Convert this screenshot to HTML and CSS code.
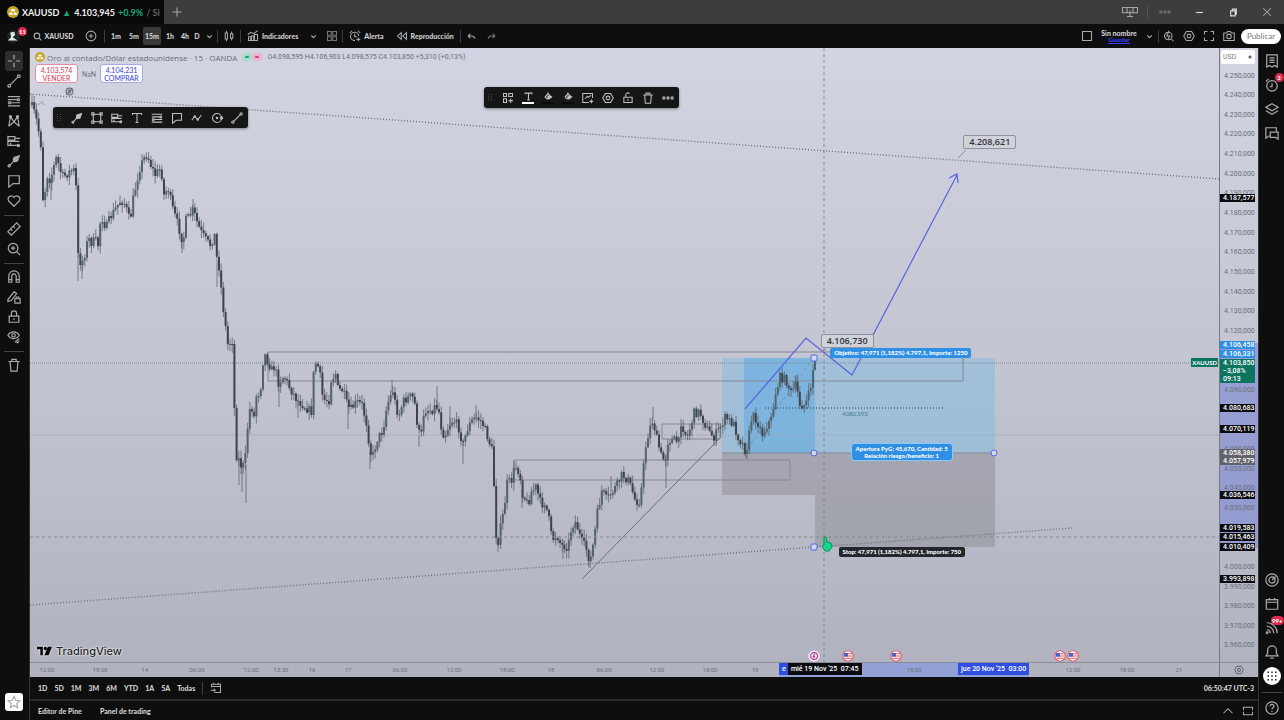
FILE: index.html
```html
<!DOCTYPE html>
<html lang="es">

<head>
    <meta charset="UTF-8">
    <meta name="viewport" content="width=device-width, initial-scale=1.0">
    <title>XAUUSD 4.103,945 +0.9%</title>
    <link rel="stylesheet" href="styles.css">
</head>

<body>

<!-- icon set -->
<svg class="sprite" aria-hidden="true">
    <symbol id="i-plus" viewBox="0 0 16 16"><path d="M8 2v12M2 8h12"/></symbol>
    <symbol id="i-search" viewBox="0 0 16 16"><circle cx="7" cy="7" r="5"/><path d="M11 11l4 4"/></symbol>
    <symbol id="i-add" viewBox="0 0 16 16"><circle cx="8" cy="8" r="6.5"/><path d="M8 5v6M5 8h6"/></symbol>
    <symbol id="i-down" viewBox="0 0 16 16"><path d="M4 6l4 4 4-4"/></symbol>
    <symbol id="i-up" viewBox="0 0 16 16"><path d="M2 11l6-6 6 6"/></symbol>
    <symbol id="i-candles" viewBox="0 0 16 16"><path d="M3 4h3v8H3zM4.500 1v3M4.500 12v3M10 5h3v6h-3zM11.500 2v3M11.500 11v3"/></symbol>
    <symbol id="i-indicators" viewBox="0 0 16 16"><path d="M1 6l4-3 4 2 5-4M2 14V9h3v5zM6 14V8h3v6zM10 14V6h4v8z"/></symbol>
    <symbol id="i-grid" viewBox="0 0 16 16"><path d="M2 2h5v5H2zM9 2h5v5H9zM2 9h5v5H2zM9 9h5v5H9z"/></symbol>
    <symbol id="i-alert" viewBox="0 0 16 16"><path d="M13 8a5.500 5.500 0 1 0-5 6M7.500 5v4h3M1 4l3-3M12 1l3 3M12.500 10v5M10 12.500h5"/></symbol>
    <symbol id="i-replay" viewBox="0 0 16 16"><path d="M7 3.500L2 8l5 4.500zM14 3.500L9 8l5 4.500z"/></symbol>
    <symbol id="i-undo" viewBox="0 0 16 16"><path d="M6 3L2 7l4 4M2 7h6q5 0 6 5"/></symbol>
    <symbol id="i-redo" viewBox="0 0 16 16"><path d="M10 3l4 4-4 4M14 7H8q-5 0-6 5"/></symbol>
    <symbol id="i-layout" viewBox="0 0 16 16"><path d="M2 2h12v12H2z"/></symbol>
    <symbol id="i-quick" viewBox="0 0 16 16"><circle cx="7" cy="8" r="5"/><path d="M11 12l3 3M8 1L5 8h4l-2 4"/></symbol>
    <symbol id="i-settings" viewBox="0 0 16 16"><path d="M4.500 2h7L15 8l-3.500 6h-7L1 8z"/><circle cx="8" cy="8" r="2.500"/></symbol>
    <symbol id="i-full" viewBox="0 0 16 16"><path d="M2 6V2h4M10 2h4v4M14 10v4h-4M6 14H2v-4"/></symbol>
    <symbol id="i-camera" viewBox="0 0 16 16"><path d="M1 4h4l1-2h4l1 2h4v10H1z"/><circle cx="8" cy="8.500" r="3"/></symbol>
    <symbol id="i-cross" viewBox="0 0 16 16"><path d="M8 1v5M8 10v5M1 8h5M10 8h5"/></symbol>
    <symbol id="i-line" viewBox="0 0 16 16"><path d="M3.500 12.500l9-9"/><circle cx="2.500" cy="13.500" r="1.500"/><circle cx="13.500" cy="2.500" r="1.500"/></symbol>
    <symbol id="i-fib" viewBox="0 0 16 16"><path d="M1 3h14M1 6.500h11M4 10h11M1 13.500h14"/><circle cx="13" cy="6.500" r="1.300"/><circle cx="3" cy="10" r="1.300"/></symbol>
    <symbol id="i-pattern" viewBox="0 0 16 16"><path d="M2 14L4 3l4 6 4-6 2 11M2 14l6-5 6 5"/><circle cx="4" cy="3" r="1.300"/><circle cx="12" cy="3" r="1.300"/></symbol>
    <symbol id="i-forecast" viewBox="0 0 16 16"><path d="M1 2v12M1 3h8v4H1M1 8.500h13M1 13h13M4 13v-3M9 5h6"/><circle cx="13" cy="13" r="1.300"/></symbol>
    <symbol id="i-brush" viewBox="0 0 16 16"><path d="M2.500 13.500l11-11"/><path d="M7 7l1-3 6-2-2 6-3 1z" fill="currentColor"/><circle cx="2.500" cy="13.500" r="1.300"/></symbol>
    <symbol id="i-callout" viewBox="0 0 16 16"><path d="M2 2h12v9H7l-5 4z"/></symbol>
    <symbol id="i-heart" viewBox="0 0 16 16"><path d="M8 14L2 8C-1 4 5 0 8 4c3-4 9 0 6 4z"/></symbol>
    <symbol id="i-ruler" viewBox="0 0 16 16"><path d="M1 11L11 1l4 4L5 15zM7 5l2 2M4 8l2 2"/></symbol>
    <symbol id="i-zoom" viewBox="0 0 16 16"><circle cx="7" cy="7" r="5.500"/><path d="M11 11l4 4M7 4.500v5M4.500 7h5"/></symbol>
    <symbol id="i-magnet" viewBox="0 0 16 16"><path d="M2 14V7a6 6 0 0 1 12 0v7h-3.500V7a2.500 2.500 0 0 0-5 0v7zM2 11h3.500M10.500 11H14"/></symbol>
    <symbol id="i-pencil" viewBox="0 0 16 16"><path d="M1 11l7-9 3 2-6 8-4 1zM9 10h6v5H9zM10.500 10V8h3v2"/></symbol>
    <symbol id="i-lock" viewBox="0 0 16 16"><path d="M2.500 7h11v7h-11zM5 7V4a3 3 0 0 1 6 0v3M8 9.500v2"/></symbol>
    <symbol id="i-unlock" viewBox="0 0 16 16"><path d="M2.500 7h11v7h-11zM5 7V4a3 3 0 0 1 5-2M8 9v3"/></symbol>
    <symbol id="i-eye" viewBox="0 0 16 16"><path d="M1 6c3-5 10-5 13 0-3 5-10 5-13 0z"/><circle cx="7.500" cy="6" r="2"/><path d="M9 14l5-4M11 15l3-2"/></symbol>
    <symbol id="i-study" viewBox="0 0 16 16"><circle cx="8" cy="8" r="6"/><circle cx="8" cy="8" r="2.500"/><path d="M3 13L13 3"/></symbol>
    <symbol id="i-trash" viewBox="0 0 16 16"><path d="M1.500 4h13M5.500 4V1.500h5V4M3.500 4l1 11h7l1-11"/></symbol>
    <symbol id="i-star" viewBox="0 0 16 16"><path d="M8 1.500l2 4.500 4.800.5-3.600 3.200 1 4.800L8 12l-4.200 2.500 1-4.800L1.200 6.500 6 6z"/></symbol>
    <symbol id="i-rect" viewBox="0 0 16 16"><path d="M3 3h10v10H3zM1 1h3v3H1zM12 1h3v3h-3zM1 12h3v3H1zM12 12h3v3h-3z"/></symbol>
    <symbol id="i-text" viewBox="0 0 16 16"><path d="M2 4V2h12v2M8 2v12M6 14h4"/></symbol>
    <symbol id="i-wave" viewBox="0 0 16 16"><path d="M1 11l4-5 4 4 5-6"/><circle cx="5" cy="6" r="1"/><circle cx="9" cy="10" r="1"/></symbol>
    <symbol id="i-circle" viewBox="0 0 16 16"><circle cx="8" cy="8" r="6"/><circle cx="8" cy="8" r="1"/><circle cx="14" cy="8" r="1.500"/></symbol>
    <symbol id="i-template" viewBox="0 0 16 16"><path d="M2 2h4v4H2zM9 2h5v4H9zM2 9h4v5H2zM8.500 11.500h6M11.500 8.500v6"/></symbol>
    <symbol id="i-fill" viewBox="0 0 16 16"><path d="M7 1v4M7 3l6 6-4 3H5L2 9z"/><path d="M7 7l6 2-4 3H7z" fill="currentColor"/></symbol>
    <symbol id="i-note" viewBox="0 0 16 16"><path d="M14 8V2H1v12h8M4 9l3-3 2 1 3-3M12.500 10v5M10 12.500h5"/></symbol>
    <symbol id="i-dots" viewBox="0 0 16 16"><circle cx="2.500" cy="8" r="1.500"/><circle cx="8" cy="8" r="1.500"/><circle cx="13.500" cy="8" r="1.500"/></symbol>
    <symbol id="i-watch" viewBox="0 0 16 16"><path d="M2 1h12v14l-3-2-3 2-3-2-3 2zM5 4.500h6M5 7h6M5 9.500h6"/></symbol>
    <symbol id="i-clock" viewBox="0 0 16 16"><circle cx="8" cy="9" r="6"/><path d="M8 6v4H5M1 4l3-3"/></symbol>
    <symbol id="i-layers" viewBox="0 0 16 16"><path d="M8 2l7 4-7 4-7-4zM1 10l7 4 7-4"/></symbol>
    <symbol id="i-chat" viewBox="0 0 16 16"><path d="M5 11l-4 3V2h12v4M6 7h9v8l-3-2H6z"/></symbol>
    <symbol id="i-target" viewBox="0 0 16 16"><circle cx="8" cy="8" r="7"/><circle cx="8" cy="8" r="3.500"/><path d="M8 8l4-4"/></symbol>
    <symbol id="i-calendar" viewBox="0 0 16 16"><path d="M1.500 3h13v11h-13zM1.500 6h13M5 1v3M11 1v3"/></symbol>
    <symbol id="i-feed" viewBox="0 0 16 16"><path d="M2 6a8 8 0 0 1 8 8M2 2a12 12 0 0 1 12 12M2 10a4 4 0 0 1 4 4"/><circle cx="2.500" cy="13.500" r="1"/></symbol>
    <symbol id="i-bell" viewBox="0 0 16 16"><path d="M1 12.500h14l-2-3V6a5 5 0 0 0-10 0v3.500zM6 15h4"/></symbol>
    <symbol id="i-apps" viewBox="0 0 16 16"><path d="M2 2h2v2H2zM7 2h2v2H7zM12 2h2v2h-2zM2 7h2v2H2zM7 7h2v2H7zM12 7h2v2h-2zM2 12h2v2H2zM7 12h2v2H7zM12 12h2v2h-2z" fill="currentColor" stroke="none"/></symbol>
    <symbol id="i-help" viewBox="0 0 16 16"><circle cx="8" cy="8" r="7"/><path d="M5.800 6c0-3 4.500-3 4.500 0 0 1.500-2.300 1.500-2.300 3.500M8 11v1.500"/></symbol>
    <symbol id="i-goto" viewBox="0 0 16 16"><path d="M6 14h8V3H2v4M2 6h12M5 1v3M11 1v3M1 11h6M5 9l2 2-2 2"/></symbol>
    <symbol id="i-screens" viewBox="0 0 24 16"><path d="M2 2h20v7H2zM8 2v7M16 2v7M12 6v8M8 14h8"/></symbol>
    <symbol id="i-min" viewBox="0 0 16 16"><path d="M2 8h12"/></symbol>
    <symbol id="i-restore" viewBox="0 0 16 16"><path d="M3 5h8v9H3zM6 5V2h7v9h-2"/></symbol>
    <symbol id="i-close" viewBox="0 0 16 16"><path d="M3 3l10 10M13 3L3 13"/></symbol>
    <symbol id="i-panel" viewBox="0 0 16 16"><path d="M2 7V3h12v4M2 9v4h12V9"/></symbol>
    <symbol id="i-gold" viewBox="0 0 16 16"><circle cx="8" cy="8" r="8" fill="#c9a227" stroke="none"/><path d="M5 7l1-3h4l1 3zM2.500 11.500l1-3h3.500l1 3zM8.500 11.500l1-3H12.500l1 3z" fill="#fff" stroke="none"/></symbol>
    <symbol id="i-flag" viewBox="0 0 16 16"><circle cx="8" cy="8" r="7" fill="#fff" stroke="#e0525c"/><path d="M8 5h5M8 8h6M3 11h10" stroke="#e0525c"/><path d="M3 4h5v5H2z" fill="#4562c9" stroke="none"/></symbol>
    <symbol id="i-bolt" viewBox="0 0 16 16"><circle cx="8" cy="8" r="6" fill="#fff" stroke="#f4e6f4" stroke-width="3"/><circle cx="8" cy="8" r="4.500" stroke="#a8329e" stroke-width="1.500"/><path d="M9 5L7 8.500h2L7.500 11" stroke="#a8329e"/></symbol>
</svg>

<header class="titlebar">
    <div class="tab">
        <svg class="icon gold"><use href="#i-gold"/></svg>
        <span>XAUUSD</span>
        <span class="up">▲</span>
        <span>4.103,945</span>
        <span class="up">+0.9%</span>
        <span class="fade">/ Si</span>
    </div>
    <button class="new-tab" aria-label="Nueva pestaña"><svg class="icon"><use href="#i-plus"/></svg></button>
    <div class="window-controls">
        <button aria-label="Pantallas"><svg class="icon wide"><use href="#i-screens"/></svg></button>
        <span class="sep"></span>
        <button aria-label="Menú"><svg class="icon dim"><use href="#i-dots"/></svg></button>
        <button aria-label="Minimizar"><svg class="icon small"><use href="#i-min"/></svg></button>
        <button aria-label="Restaurar"><svg class="icon small"><use href="#i-restore"/></svg></button>
        <button aria-label="Cerrar"><svg class="icon"><use href="#i-close"/></svg></button>
    </div>
</header>

<nav class="toolbar">
    <button class="avatar" aria-label="Perfil">
        <svg viewBox="0 0 16 16"><circle cx="8" cy="8" r="8" fill="#1d2526"/><path d="M4 3l5-1 1 4-3 3 6 4H1l4-4z" fill="#dfe5e5"/></svg>
        <span class="badge">11</span>
    </button>
    <button class="symbol"><svg class="icon small"><use href="#i-search"/></svg>XAUUSD</button>
    <button class="w26" aria-label="Comparar"><svg class="icon"><use href="#i-add"/></svg></button>
    <span class="sep"></span>
    <div class="intervals">
        <button>1m</button>
        <button>5m</button>
        <button class="active">15m</button>
        <button>1h</button>
        <button class="narrow">4h</button>
        <button class="narrow">D</button>
        <button class="narrow" aria-label="Intervalos"><svg class="icon small"><use href="#i-down"/></svg></button>
    </div>
    <span class="sep"></span>
    <button class="w22" aria-label="Velas"><svg class="icon"><use href="#i-candles"/></svg></button>
    <span class="sep"></span>
    <button class="labelled"><svg class="icon"><use href="#i-indicators"/></svg>Indicadores</button>
    <button class="w18" aria-label="Más indicadores"><svg class="icon small"><use href="#i-down"/></svg></button>
    <button class="w20" aria-label="Plantillas"><svg class="icon dim"><use href="#i-grid"/></svg></button>
    <span class="sep"></span>
    <button class="labelled"><svg class="icon"><use href="#i-alert"/></svg>Alerta</button>
    <button class="labelled"><svg class="icon"><use href="#i-replay"/></svg>Reproducción</button>
    <span class="sep"></span>
    <button class="w22" aria-label="Deshacer"><svg class="icon small"><use href="#i-undo"/></svg></button>
    <button class="w18" aria-label="Rehacer"><svg class="icon small dim"><use href="#i-redo"/></svg></button>

    <div class="toolbar-right">
        <button class="w22" aria-label="Diseño"><svg class="icon"><use href="#i-layout"/></svg></button>
        <button class="layout-name">Sin nombre<span>Guardar</span></button>
        <button class="w18" aria-label="Diseños"><svg class="icon small"><use href="#i-down"/></svg></button>
        <span class="sep"></span>
        <button class="w20" aria-label="Búsqueda rápida"><svg class="icon"><use href="#i-quick"/></svg></button>
        <button class="w20" aria-label="Configuración"><svg class="icon"><use href="#i-settings"/></svg></button>
        <button class="w20" aria-label="Pantalla completa"><svg class="icon"><use href="#i-full"/></svg></button>
        <button class="w20" aria-label="Captura"><svg class="icon"><use href="#i-camera"/></svg></button>
        <button class="publish">Publicar</button>
    </div>
</nav>

<div class="workspace">
    <aside class="rail left">
        <button class="active" aria-label="Cursor"><svg class="icon"><use href="#i-cross"/></svg></button>
        <button aria-label="Línea"><svg class="icon"><use href="#i-line"/></svg></button>
        <button aria-label="Fibonacci"><svg class="icon"><use href="#i-fib"/></svg></button>
        <button aria-label="Patrones"><svg class="icon"><use href="#i-pattern"/></svg></button>
        <button aria-label="Previsión"><svg class="icon"><use href="#i-forecast"/></svg></button>
        <button aria-label="Pinceles"><svg class="icon"><use href="#i-brush"/></svg></button>
        <button aria-label="Anotación"><svg class="icon"><use href="#i-callout"/></svg></button>
        <button aria-label="Iconos"><svg class="icon"><use href="#i-heart"/></svg></button>
        <hr>
        <button aria-label="Medir"><svg class="icon"><use href="#i-ruler"/></svg></button>
        <button aria-label="Acercar"><svg class="icon"><use href="#i-zoom"/></svg></button>
        <hr>
        <button aria-label="Imán"><svg class="icon"><use href="#i-magnet"/></svg></button>
        <button aria-label="Modo dibujo"><svg class="icon"><use href="#i-pencil"/></svg></button>
        <button aria-label="Bloquear"><svg class="icon"><use href="#i-lock"/></svg></button>
        <button aria-label="Ocultar"><svg class="icon"><use href="#i-eye"/></svg></button>
        <hr>
        <button aria-label="Eliminar"><svg class="icon"><use href="#i-trash"/></svg></button>
        <button class="favorites" aria-label="Favoritos"><svg class="icon"><use href="#i-star"/></svg></button>
    </aside>

    <main class="center">
        <section class="chart">
            <div class="plot">
                <svg class="drawing" viewBox="30 48 1189 614" preserveAspectRatio="none">
                    <g class="zones">
                        <path class="profit" d="M722 358h93v95h-93zM815 358h180v95H815z"/>
                        <path class="profit strong" d="M744 358h71v95h-71z"/>
                        <path class="loss" d="M722 453h93v42h-93zM815 453h180v94H815z"/>
                    </g>
                    <path class="grid-line" d="M30 435h1189"/>
                    <path class="price-line" d="M30 363h1189"/>
                    <path class="box" d="M268 352h695v29H268zM514 460h276v20H514zM662 424h58v15h-58zM722 453h273"/>
                    <path class="trend dotted" d="M30 94L1219 179M30 605L1072 528"/>
                    <path class="trend" d="M582 579L722 436"/>
                    <path class="trend faint" d="M744 453L814 358"/>
                    <path class="target-line" d="M765 408h179"/>
                    <path class="wicks" id="wicks"/>
                    <path class="bodies down" id="down"/>
                    <path class="bodies up" id="up"/>
                    <path class="crosshair" d="M824 48v614M30 537h1189"/>
                    <path class="projection" d="M745 409L806 338L852 375L957 175M949 178l8-4 1 9"/>
                    <path class="leader" d="M958 158l8-8M821 352l5-3"/>
                    <g class="handles">
                        <rect x="811" y="355" width="6" height="6" rx="1"/>
                        <circle cx="814" cy="453" r="3"/>
                        <circle cx="994" cy="453" r="3"/>
                        <rect x="811" y="544" width="6" height="6" rx="1"/>
                    </g>
                </svg>

                <div class="legend">
                    <div class="legend-title">
                        <svg class="icon gold"><use href="#i-gold"/></svg>
                        <h1>Oro al contado/Dólar estadounidense · 15 · OANDA</h1>
                        <span class="status"><i></i><i></i></span>
                        <span class="ohlc">O4.098,595 H4.106,903 L4.098,575 C4.103,850 +5,310 (+0,13%)</span>
                    </div>
                    <div class="quotes">
                        <button class="sell">4.103,574<br>VENDER</button>
                        <span>NaN</span>
                        <button class="buy">4.104,231<br>COMPRAR</button>
                    </div>
                    <svg class="icon small hidden-study"><use href="#i-study"/></svg>
                    <button class="collapse" aria-label="Contraer"><svg class="icon small"><use href="#i-up"/></svg></button>
                </div>

                <div class="floating shapes">
                    <span class="grip"></span>
                    <button aria-label="Flecha"><svg class="icon"><use href="#i-brush"/></svg></button>
                    <button aria-label="Rectángulo"><svg class="icon"><use href="#i-rect"/></svg></button>
                    <button aria-label="Posición larga"><svg class="icon"><use href="#i-forecast"/></svg></button>
                    <button aria-label="Texto"><svg class="icon"><use href="#i-text"/></svg></button>
                    <button aria-label="Retroceso"><svg class="icon"><use href="#i-fib"/></svg></button>
                    <button aria-label="Nota"><svg class="icon"><use href="#i-callout"/></svg></button>
                    <button aria-label="Trayectoria"><svg class="icon"><use href="#i-wave"/></svg></button>
                    <button aria-label="Círculo"><svg class="icon"><use href="#i-circle"/></svg></button>
                    <button aria-label="Tendencia"><svg class="icon"><use href="#i-line"/></svg></button>
                </div>

                <div class="floating options">
                    <span class="grip"></span>
                    <button aria-label="Plantilla"><svg class="icon"><use href="#i-template"/></svg></button>
                    <button class="underlined" aria-label="Color de texto"><svg class="icon small"><use href="#i-text"/></svg></button>
                    <button class="swatch" aria-label="Relleno objetivo"><svg class="icon small"><use href="#i-fill"/></svg></button>
                    <button class="swatch" aria-label="Relleno stop"><svg class="icon small"><use href="#i-fill"/></svg></button>
                    <button aria-label="Añadir nota"><svg class="icon"><use href="#i-note"/></svg></button>
                    <button aria-label="Ajustes"><svg class="icon"><use href="#i-settings"/></svg></button>
                    <button aria-label="Bloqueo"><svg class="icon"><use href="#i-unlock"/></svg></button>
                    <button aria-label="Borrar"><svg class="icon"><use href="#i-trash"/></svg></button>
                    <button aria-label="Más"><svg class="icon"><use href="#i-dots"/></svg></button>
                </div>

                <span class="price-note high">4.208,621</span>
                <span class="price-note current">4.106,730</span>
                <span class="order target">Objetivo: 47,971 (1,182%) 4.797,1, Importe: 1250</span>
                <span class="order entry">Apertura PyG: 45,670, Cantidad: 5<br>Relación riesgo/beneficio: 1</span>
                <span class="order stop">Stop: 47,971 (1,182%) 4.797,1, Importe: 750</span>
                <span class="level-note">4080,593</span>
                <span class="symbol-tag">XAUUSD</span>
                <svg class="cursor" viewBox="0 0 12 16"><path d="M3 1l2 0 1 5 4 1 1 4-3 4H4L1 10l2-1z" fill="#12d98a" stroke="#0b8f66"/></svg>

                <svg class="icon event e1"><use href="#i-bolt"/></svg>
                <svg class="icon event e2"><use href="#i-flag"/></svg>
                <svg class="icon event e3"><use href="#i-flag"/></svg>
                <svg class="icon event e4"><use href="#i-flag"/></svg>
                <svg class="icon event e5"><use href="#i-flag"/></svg>

                <div class="brand">
                    <svg viewBox="0 0 18 12"><path d="M0 1h7v10H4V4H0zM13 1h5l-4 10H9z"/><circle cx="10" cy="3" r="2"/></svg>
                    TradingView
                </div>
            </div>

            <div class="price-axis" id="price-axis">
                <select aria-label="Moneda"><option>USD</option></select>
                <div class="range"></div>
            </div>
            <div class="time-axis" id="time-axis">
                <div class="range"></div>
            </div>
            <button class="axis-settings" aria-label="Ajustes de escala"><svg class="icon"><use href="#i-settings"/></svg></button>
        </section>

        <div class="ranges">
            <button>1D</button>
            <button>5D</button>
            <button>1M</button>
            <button>3M</button>
            <button>6M</button>
            <button>YTD</button>
            <button>1A</button>
            <button>5A</button>
            <button>Todas</button>
            <span class="sep"></span>
            <button aria-label="Ir a"><svg class="icon"><use href="#i-goto"/></svg></button>
            <time>06:50:47 UTC-3</time>
        </div>

        <footer class="panels">
            <button>Editor de Pine</button>
            <button>Panel de trading</button>
            <div class="panel-controls">
                <button aria-label="Abrir panel"><svg class="icon"><use href="#i-up"/></svg></button>
                <button aria-label="Maximizar panel"><svg class="icon"><use href="#i-panel"/></svg></button>
            </div>
        </footer>
    </main>

    <aside class="rail right">
        <button aria-label="Lista de seguimiento"><svg class="icon"><use href="#i-watch"/></svg></button>
        <button aria-label="Alertas"><svg class="icon"><use href="#i-clock"/></svg><span class="badge">3</span></button>
        <button aria-label="Objetos"><svg class="icon"><use href="#i-layers"/></svg></button>
        <button aria-label="Chats"><svg class="icon"><use href="#i-chat"/></svg></button>
        <span class="spacer"></span>
        <button aria-label="Screener"><svg class="icon"><use href="#i-target"/></svg></button>
        <button aria-label="Calendario"><svg class="icon"><use href="#i-calendar"/></svg></button>
        <button aria-label="Noticias"><svg class="icon"><use href="#i-feed"/></svg><span class="badge">99+</span></button>
        <button aria-label="Notificaciones"><svg class="icon"><use href="#i-bell"/></svg></button>
        <button class="apps" aria-label="Productos"><svg class="icon"><use href="#i-apps"/></svg></button>
        <hr>
        <button aria-label="Ayuda"><svg class="icon"><use href="#i-help"/></svg></button>
    </aside>
</div>

<script src="chart.js"></script>
</body>
</html>
```
FILE: styles.css
```css
:root {
    --bar: #0e0e0e;
    --frame: #3d3d3d;
    --line: #333333;
    --text: #d0d0d0;
    --icon: #a9a9a9;
    --blue: #2f8fe4;
    --indigo: #5664e0;
    --tag-blue: #2f4fe0;
    --teal: #0b7560;
    --red: #e0284a;
}

* {
    margin: 0;
    padding: 0;
    box-sizing: border-box;
}

body {
    display: flex;
    flex-direction: column;
    height: 100vh;
    overflow: hidden;
    background: var(--bar);
    color: var(--text);
    font-family: Lato, "Open Sans", sans-serif;
    font-size: 7px;
    font-weight: 900;
}

button,
select {
    border: 0;
    background: none;
    color: inherit;
    font: inherit;
}

button {
    display: flex;
    align-items: center;
    justify-content: center;
    position: relative;
    white-space: nowrap;
}

.sprite {
    position: absolute;
    width: 0;
    height: 0;
}

.icon {
    width: 12px;
    height: 12px;
    flex: none;
    fill: none;
    stroke: currentColor;
    stroke-width: 1.4;
    color: var(--icon);
}

.icon.small {
    width: 9px;
    height: 9px;
    stroke-width: 2;
}

.icon.wide {
    width: 18px;
}

.icon.dim {
    color: #777777;
}

.sep {
    width: 1px;
    height: 13px;
    flex: none;
    background: #3c3c3c;
}

.badge {
    position: absolute;
    top: 0;
    right: 0;
    min-width: 9px;
    padding: 0 1px;
    border-radius: 5px;
    background: var(--red);
    color: #ffffff;
    font-size: 6px;
    line-height: 9px;
    text-align: center;
}

/* window frame */
.titlebar {
    display: flex;
    align-items: center;
    height: 24px;
    flex: none;
    background: var(--frame);
}

.tab {
    display: flex;
    align-items: center;
    gap: 3px;
    width: 164px;
    height: 24px;
    padding-left: 7px;
    background: #080808;
    color: #f0f0f0;
    font-size: 9px;
    font-weight: 700;
    white-space: nowrap;
}

.up {
    color: #18a878;
}

.fade {
    color: #666666;
}

.new-tab {
    width: 25px;
}

.window-controls {
    display: flex;
    align-items: center;
    margin-left: auto;
}

.window-controls button {
    width: 34px;
    height: 24px;
}

.window-controls .sep {
    background: #555555;
}

.window-controls .small {
    color: #e0e0e0;
}

/* top toolbar */
.toolbar {
    display: flex;
    align-items: center;
    height: 24px;
    flex: none;
}

.toolbar button {
    height: 18px;
}

.toolbar .avatar {
    width: 29px;
    justify-content: flex-start;
    padding-left: 7px;
}

.avatar svg {
    width: 13px;
    height: 13px;
}

.avatar .badge {
    right: 2px;
}

.symbol {
    gap: 2px;
    width: 49px;
}

.w18 {
    width: 18px;
}

.w20 {
    width: 20px;
}

.w22 {
    width: 22px;
}

.w26 {
    width: 26px;
}

.intervals {
    display: flex;
    padding: 0 2px;
}

.intervals button {
    width: 18px;
}

.intervals .narrow {
    width: 12px;
}

.intervals .active {
    border-radius: 2px;
    background: #3a3a3a;
}

.labelled {
    gap: 3px;
    padding: 0 6px;
}

.toolbar-right {
    display: flex;
    align-items: center;
    margin-left: auto;
    padding-right: 3px;
}

.layout-name {
    flex-direction: column;
    width: 42px;
    line-height: 8px;
}

.layout-name span {
    color: #3340ff;
    font-size: 6px;
    line-height: 6px;
    text-decoration: underline;
}

.toolbar .publish {
    width: 40px;
    height: 15px;
    margin-left: 2px;
    border-radius: 8px;
    background: #ffffff;
    color: #777777;
    font-size: 8px;
    font-weight: 400;
}

/* side rails */
.workspace {
    display: flex;
    flex: 1;
    min-height: 0;
}

.rail {
    display: flex;
    flex-direction: column;
    align-items: center;
    flex: none;
}

.rail .icon {
    width: 14px;
    height: 14px;
}

.left {
    width: 30px;
    padding: 3px 2px 9px 0;
    border-right: 1px solid var(--line);
}

.left button {
    width: 18px;
    height: 20px;
    flex: none;
}

.left .active {
    border-radius: 3px;
    background: #2e2e2e;
}

.rail hr {
    width: 20px;
    height: 1px;
    margin: 4px 0 3px;
    flex: none;
    border: 0;
    background: #444444;
}

.left .favorites {
    height: 18px;
    margin-top: auto;
    border-radius: 3px;
    background: #ffffff;
}

.right {
    width: 26px;
    padding-top: 1px;
    border-left: 1px solid var(--line);
}

.right button {
    width: 24px;
    height: 24px;
    flex: none;
}

.spacer {
    flex: 1;
}

.apps::before {
    content: "";
    position: absolute;
    inset: 3px;
    border-radius: 50%;
    background: #ffffff;
}

.apps .icon {
    position: relative;
    width: 12px;
    height: 12px;
    color: #222222;
}

.center {
    display: flex;
    flex-direction: column;
    flex: 1;
    min-width: 0;
}

/* chart */
.chart {
    display: grid;
    grid-template-columns: 1fr 39px;
    grid-template-rows: 1fr 15px;
    flex: 1;
    min-height: 0;
    background: linear-gradient(#d2d4e1, #c3c5d1 50%, #b0b3bf);
    color: #6b6e79;
    font-weight: 400;
}

.plot {
    position: relative;
    min-height: 0;
    overflow: hidden;
}

.drawing {
    position: absolute;
    width: 100%;
    height: 100%;
    fill: none;
}

.profit {
    fill: rgba(112, 184, 230, 0.4);
}

.profit.strong {
    fill: rgba(72, 166, 232, 0.4);
}

.loss {
    fill: rgba(128, 128, 136, 0.4);
}

.grid-line {
    stroke: #9da0ac;
    stroke-dasharray: 1 1;
}

.price-line {
    stroke: #80858f;
    stroke-dasharray: 1 1;
}

.box {
    stroke: #858893;
}

.trend {
    stroke: #6d7079;
}

.trend.dotted {
    stroke-width: 1.4;
    stroke-dasharray: 1 2;
}

.trend.faint {
    stroke-dasharray: 3 3;
    opacity: 0.5;
}

.target-line {
    stroke: #3a6f83;
    stroke-width: 1.4;
    stroke-dasharray: 1 2;
}

.wicks {
    stroke: #59606a;
    opacity: 0.75;
}

.bodies {
    stroke-width: 2;
}

.bodies.down {
    stroke: #3e434d;
}

.bodies.up {
    stroke: #52656d;
}

.crosshair {
    stroke: #85888f;
    stroke-dasharray: 3 3;
}

.projection {
    stroke: var(--indigo);
    stroke-width: 1.2;
}

.leader {
    stroke: #898c95;
}

.handles {
    fill: #d0d6ee;
    stroke: var(--indigo);
}

.legend {
    position: absolute;
    top: 2px;
    left: 5px;
}

.legend-title {
    display: flex;
    align-items: center;
    gap: 2px;
    height: 14px;
    white-space: nowrap;
}

.legend-title .gold {
    width: 10px;
    height: 10px;
}

.legend h1 {
    font-family: "Open Sans", sans-serif;
    font-size: 8px;
    font-weight: 400;
}

.status {
    display: flex;
    margin: 0 3px;
}

.status i {
    width: 10px;
    height: 8px;
    border: 3px solid #a9dccf;
    border-radius: 4px;
    background: #1d9c7a;
}

.status i + i {
    border-color: #eab4cc;
    background: #cf3f80;
}

.ohlc {
    font-family: Roboto, sans-serif;
}

.quotes {
    display: flex;
    align-items: center;
    gap: 4px;
}

.quotes button {
    width: 43px;
    height: 19px;
    border: 1px solid #e3919d;
    border-radius: 3px;
    background: #fafaff;
    color: #d8404f;
    line-height: 8px;
}

.quotes .buy {
    border-color: #a3abe8;
    color: #4048cf;
}

.hidden-study {
    display: block;
    margin: 4px 0 0 30px;
    color: #6b6e79;
}

.collapse {
    margin: 3px 0 0 2px;
}

.floating {
    display: flex;
    position: absolute;
    height: 21px;
    padding-right: 1px;
    border-radius: 3px;
    background: #161616;
    box-shadow: 0 1px 3px rgba(0, 0, 0, 0.4);
}

.floating button {
    width: 20px;
}

.floating .icon {
    color: #c0c0c0;
}

.shapes {
    top: 59px;
    left: 23px;
}

.options {
    top: 39px;
    left: 454px;
}

.grip {
    width: 4px;
    margin: 7px 6px 7px 4px;
    border: 1px dotted #444444;
    border-width: 0 1px;
}

.underlined,
.swatch {
    flex-direction: column;
    gap: 1px;
}

.underlined::after,
.swatch::after {
    content: "";
    width: 12px;
    height: 2px;
    background: #ffffff;
}

.swatch::after {
    background: #0a0a0a;
}

.price-note {
    position: absolute;
    padding: 0 5px;
    border: 1px solid #90939c;
    border-radius: 2px;
    background: #d0d2da;
    color: #30333a;
    font: 600 9px/12px "Open Sans", sans-serif;
}

.price-note.high {
    top: 14.2%;
    left: 78.5%;
}

.price-note.current {
    top: 46.6%;
    left: 66.5%;
}

.order {
    position: absolute;
    padding: 1px 4px;
    border-radius: 2px;
    background: var(--blue);
    color: #ffffff;
    font-size: 6px;
    font-weight: 900;
    line-height: 8px;
    text-align: center;
    white-space: nowrap;
}

.order.target {
    top: 48.9%;
    left: 67.3%;
}

.order.entry {
    top: 64.5%;
    left: 69.1%;
    outline: 1px solid #8ccaf5;
    line-height: 7px;
}

.order.stop {
    top: 81.3%;
    left: 68%;
    background: #24262d;
}

.level-note {
    position: absolute;
    top: 58.9%;
    left: 68.3%;
    color: #3a7f8b;
    font-size: 6px;
}

.symbol-tag {
    position: absolute;
    top: 50.5%;
    right: 1px;
    padding: 0 1px;
    background: var(--teal);
    color: #ffffff;
    font-size: 6px;
    font-weight: 700;
    line-height: 9px;
}

.cursor {
    position: absolute;
    top: 79.4%;
    left: 66.5%;
    width: 12px;
    height: 16px;
}

.event {
    position: absolute;
    bottom: 0;
    transform: translateX(-50%);
}

.e1 { left: 65.9%; }
.e2 { left: 68.8%; }
.e3 { left: 72.8%; }
.e4 { left: 86.6%; }
.e5 { left: 87.7%; }

.brand {
    display: flex;
    align-items: center;
    gap: 4px;
    position: absolute;
    bottom: 4px;
    left: 7px;
    color: #1c1e24;
    font: 500 11px/14px Inter, sans-serif;
    text-shadow: 0 0 2px #ffffff, 0 0 2px #ffffff;
}

.brand svg {
    width: 15px;
    height: 10px;
    filter: drop-shadow(0 0 1px #ffffff);
}

/* scales */
.price-axis,
.time-axis {
    position: relative;
    min-width: 0;
    min-height: 0;
    font-family: Roboto, sans-serif;
}

.price-axis {
    border-left: 1px solid #787b85;
}

.price-axis select {
    display: block;
    width: 34px;
    height: 14px;
    margin: 2px 0 0 1px;
    padding-left: 2px;
    appearance: none;
    border-radius: 2px;
    background: radial-gradient(circle at 29px 7px, #666666 1px, #ffffff 2px);
    color: #777777;
}

.price-axis .range {
    position: absolute;
    top: 48%;
    bottom: 18.5%;
    width: 100%;
    background: rgba(115, 128, 214, 0.55);
}

.tick,
.tag {
    position: absolute;
    transform: translateY(-50%);
    line-height: 8px;
    white-space: nowrap;
}

.price-axis .tick {
    left: 4px;
}

.tag {
    left: 0;
    width: 35px;
    padding-left: 3px;
    background: #0b0c12;
    color: #ffffff;
    font-weight: 500;
}

.tag.blue {
    background: var(--blue);
}

.tag.gray {
    background: #62636a;
}

.tag.teal {
    background: var(--teal);
}

.time-axis {
    border-top: 1px solid #898c96;
}

.time-axis .tick {
    top: 50%;
    transform: translate(-50%, -50%);
    font-size: 6px;
}

.time-axis .range {
    position: absolute;
    left: 63%;
    width: 21%;
    height: 100%;
    background: rgba(125, 147, 232, 0.6);
}

.time-axis .tag {
    top: 0;
    width: auto;
    padding: 0 3px;
    transform: none;
    line-height: 12px;
    white-space: pre;
}

.time-axis .tag.indigo {
    background: var(--tag-blue);
}

.axis-settings {
    border-top: 1px solid #898c96;
    border-left: 1px solid #787b85;
}

.axis-settings .icon {
    width: 10px;
    height: 10px;
    color: #555862;
}

/* bottom bars */
.ranges {
    display: flex;
    align-items: center;
    gap: 7px;
    height: 22px;
    flex: none;
    padding: 0 4px 0 8px;
}

.ranges time {
    margin-left: auto;
}

.panels {
    display: flex;
    align-items: center;
    gap: 18px;
    height: 21px;
    flex: none;
    padding: 0 4px 0 8px;
    border-top: 2px solid #2a2a2a;
}

.panel-controls {
    display: flex;
    gap: 8px;
    margin-left: auto;
}
```
FILE: chart.js
```js
// price path as [x, y] pairs in plot units
const path = [
    [31, 105], [33, 108], [36, 118], [39, 133], [42, 152], [43, 198], [45, 192], [47, 175], [50, 180], [53, 170],
    [56, 158], [59, 165], [62, 177], [66, 175], [69, 172], [74, 170], [77, 195], [78, 255], [80, 262], [83, 260],
    [86, 250], [88, 237], [91, 243], [95, 240], [98, 245], [101, 215], [106, 228], [110, 218], [116, 208], [121, 200],
    [125, 204], [130, 222], [133, 200], [136, 185], [139, 170], [143, 160], [147, 154], [150, 163], [155, 175], [161, 168],
    [164, 195], [168, 188], [173, 210], [178, 225], [183, 243], [186, 220], [189, 217], [193, 210], [197, 222], [201, 232],
    [206, 240], [210, 245], [215, 235], [217, 260], [220, 270], [222, 300], [225, 320], [227, 345], [233, 340], [234, 397],
    [236, 455], [239, 460], [242, 468], [245, 462], [247, 435], [249, 410], [252, 408], [255, 420], [257, 385], [260, 400],
    [262, 365], [265, 355], [268, 362], [272, 370], [275, 366], [278, 383], [284, 376], [290, 388], [297, 400], [303, 405],
    [309, 410], [312, 412], [314, 365], [317, 362], [320, 375], [323, 400], [329, 400], [331, 380], [336, 373], [338, 390],
    [343, 390], [347, 405], [350, 410], [357, 402], [362, 405], [367, 425], [370, 452], [373, 455], [377, 440], [383, 430],
    [387, 405], [391, 395], [393, 390], [396, 408], [399, 415], [403, 402], [407, 398], [412, 396], [415, 405], [418, 430],
    [421, 438], [424, 410], [432, 410], [436, 405], [439, 412], [442, 432], [445, 435], [449, 425], [453, 420], [458, 425],
    [463, 445], [467, 430], [471, 422], [476, 417], [482, 422], [487, 435], [492, 450], [494, 485], [495, 530], [498, 543],
    [501, 525], [504, 510], [507, 483], [512, 480], [515, 465], [518, 470], [520, 475], [522, 492], [528, 505], [531, 492],
    [536, 487], [541, 505], [545, 502], [549, 520], [552, 540], [557, 535], [561, 545], [568, 547], [572, 525], [576, 522],
    [581, 540], [586, 548], [590, 562], [594, 540], [597, 515], [600, 500], [602, 490], [607, 500], [612, 492], [617, 485],
    [622, 475], [628, 480], [632, 490], [635, 500], [639, 502], [642, 485], [645, 450], [649, 430], [653, 420], [657, 440],
    [661, 455], [665, 462], [668, 440], [674, 440], [679, 442], [681, 422], [687, 438], [691, 425], [694, 413], [700, 412],
    [703, 420], [709, 432], [714, 437], [720, 428], [725, 418], [729, 420], [734, 425], [738, 437], [743, 445], [746, 453],
    [749, 435], [752, 415], [757, 420], [762, 435], [767, 425], [772, 418], [775, 395], [780, 377], [786, 380], [791, 393],
    [796, 385], [800, 405], [805, 405], [808, 398], [812, 380], [814, 360]
];

// long wicks: x, from, to
const spikes = [
    [43, 190, 201], [51, 180, 200], [78, 255, 281], [82, 262, 279], [182, 240, 253], [193, 199, 215], [217, 260, 287],
    [239, 460, 485], [242, 465, 492], [246, 465, 503], [279, 380, 407], [298, 400, 418], [348, 405, 429], [370, 452, 469],
    [392, 380, 392], [419, 435, 447], [437, 386, 405], [450, 406, 425], [463, 440, 464], [476, 405, 418], [498, 540, 552],
    [522, 490, 508], [563, 540, 559], [590, 560, 568], [611, 476, 492], [653, 407, 420], [666, 455, 488], [746, 450, 458],
    [796, 376, 388]
];

let seed = 7;
function noise() {
    seed = (seed * 16807) % 2147483647;
    return seed / 2147483647 - 0.5;
}

function priceAt(x) {
    for (let i = 1; i < path.length; i++) {
        if (x <= path[i][0]) {
            const [x0, y0] = path[i - 1];
            const [x1, y1] = path[i];
            return y0 + (y1 - y0) * (x - x0) / (x1 - x0);
        }
    }
    return path[path.length - 1][1];
}

let wicks = '';
let up = '';
let down = '';
let open = priceAt(31);
for (let x = 32; x <= 815; x += 2.2) {
    const close = priceAt(x) + noise() * 9;
    const top = Math.min(open, close);
    const bottom = Math.max(open, close, top + 1);
    const px = x.toFixed(1);
    wicks += `M${px} ${(top - 1 - (noise() + 0.5) * 7).toFixed(1)}V${(bottom + 1 + (noise() + 0.5) * 7).toFixed(1)}`;
    const body = `M${px} ${top.toFixed(1)}V${bottom.toFixed(1)}`;
    if (close < open) up += body;
    else down += body;
    open = close;
}
// candle still being formed
up += `M815 ${open.toFixed(1)}V360`;
spikes.forEach(([x, a, b]) => wicks += `M${x} ${a}V${b}`);
document.getElementById('wicks').setAttribute('d', wicks);
document.getElementById('up').setAttribute('d', up);
document.getElementById('down').setAttribute('d', down);

function label(parent, cls, text, side, percent) {
    const el = document.createElement('span');
    el.className = cls;
    el.innerHTML = text;
    el.style[side] = percent.toFixed(2) + '%';
    parent.appendChild(el);
}

const priceAxis = document.getElementById('price-axis');
const toPercent = y => (y - 48) / 614 * 100;
const tags = [
    ['4.187,577', 198, ''],
    ['4.106,458', 345, 'blue'],
    ['4.106,331', 354, 'blue'],
    ['4.103,850<br>−3,08%<br>09:13', 371, 'teal'],
    ['4.080,683', 408, ''],
    ['4.070,119', 429, ''],
    ['4.058,380', 453, 'gray'],
    ['4.057,979', 461, 'gray'],
    ['4.036,546', 495, ''],
    ['4.019,583', 528, ''],
    ['4.015,463', 537, ''],
    ['4.010,409', 547, ''],
    ['3.993,898', 579, '']
];

// price scale, one tick every 10 dollars, left out where a tag covers it
for (let price = 4250; price >= 3960; price -= 10) {
    const y = 75.5 + (4250 - price) * 1.9655;
    if (tags.some(tag => Math.abs(tag[1] - y) < 4)) continue;
    const text = Math.floor(price / 1000) + '.' + String(price % 1000).padStart(3, '0') + ',000';
    label(priceAxis, 'tick', text, 'top', toPercent(y));
}
tags.forEach(([text, y, cls]) => label(priceAxis, 'tag ' + cls, text, 'top', toPercent(y)));

const timeAxis = document.getElementById('time-axis');
const toLeft = x => (x - 30) / 1189 * 100;
[
    ['12:00', 47], ['18:00', 100], ['14', 145], ['06:00', 197], ['12:00', 251], ['13:30', 281], ['16', 312], ['17', 348],
    ['06:00', 400], ['12:00', 454], ['18:00', 507], ['18', 551], ['06:00', 604], ['12:00', 657], ['18:00', 710],
    ['19', 755], ['18:00', 914], ['12:00', 1073], ['18:00', 1127], ['21', 1179]
].forEach(([text, x]) => label(timeAxis, 'tick', text, 'left', toLeft(x)));

label(timeAxis, 'tag indigo', 'e', 'left', toLeft(779));
label(timeAxis, 'tag', 'mié 19 Nov \'25  07:45', 'left', toLeft(788));
label(timeAxis, 'tag indigo', 'jue 20 Nov \'25  03:00', 'left', toLeft(958));
```
